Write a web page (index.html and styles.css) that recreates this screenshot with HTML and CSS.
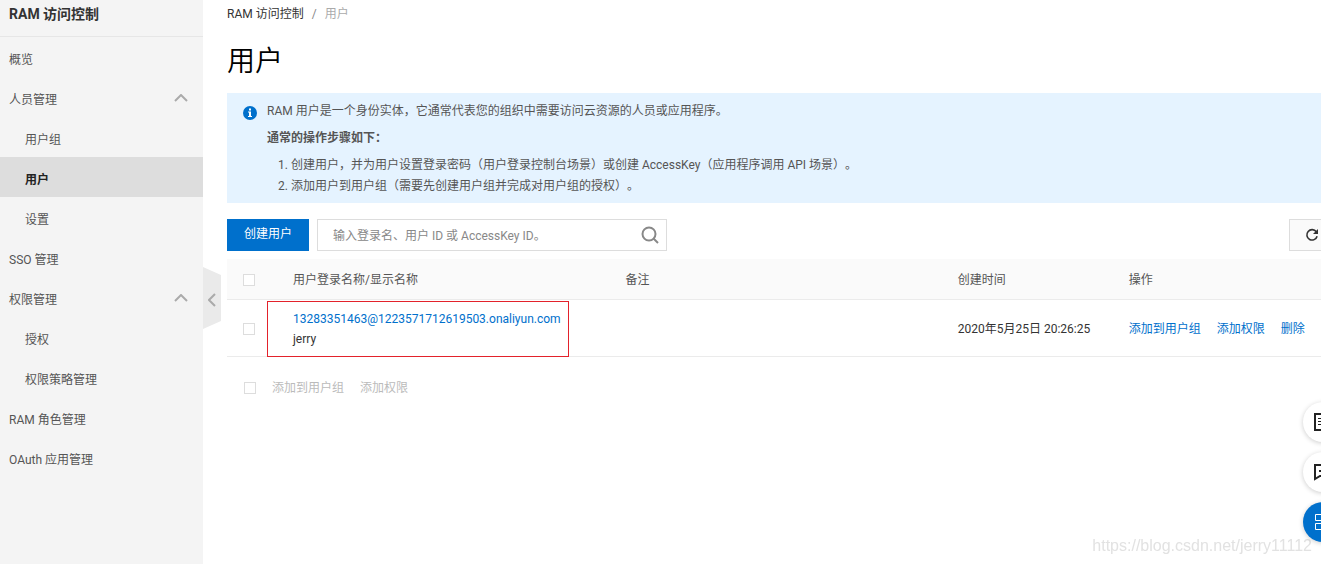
FILE: index.html
```html
<!DOCTYPE html>
<html lang="zh-CN">
    <head>
        <meta charset="UTF-8" />
        <meta name="viewport" content="width=device-width, initial-scale=1.0" />
        <title>RAM 访问控制</title>
        <link rel="stylesheet" href="styles.css">
    </head>
    <body>
        <aside class="sidebar">
            <h2 class="sidebar-title">RAM 访问控制</h2>
            <nav class="menu">
                <a href="#">概览</a>
                <a href="#" class="group">
                    人员管理
                    <svg width="14" height="12" viewBox="0 0 14 12"><path d="M1 7l6-6 6 6" /></svg>
                </a>
                <a href="#" class="sub">用户组</a>
                <a href="#" class="sub active">用户</a>
                <a href="#" class="sub">设置</a>
                <a href="#">SSO 管理</a>
                <a href="#" class="group">
                    权限管理
                    <svg width="14" height="12" viewBox="0 0 14 12"><path d="M1 7l6-6 6 6" /></svg>
                </a>
                <a href="#" class="sub">授权</a>
                <a href="#" class="sub">权限策略管理</a>
                <a href="#">RAM 角色管理</a>
                <a href="#">OAuth 应用管理</a>
            </nav>
            <button class="collapse" aria-label="收起">
                <svg width="8" height="14" viewBox="0 0 8 14"><path d="M7 1L1 7l6 6" /></svg>
            </button>
        </aside>

        <main class="main">
            <div class="breadcrumb">
                <a href="#">RAM 访问控制</a>
                <span>/</span>
                <span class="current">用户</span>
            </div>
            <h1>用户</h1>

            <section class="notice">
                <svg class="notice-icon" width="14" height="14" viewBox="0 0 14 14">
                    <circle cx="7" cy="7" r="7" fill="#0070cc" />
                    <path d="M6 2.5h2v2H6zM5 5.5h3v4.5h1v1H5v-1h1V6.500H5z" fill="#fff" />
                </svg>
                <div>
                    <p>RAM 用户是一个身份实体，它通常代表您的组织中需要访问云资源的人员或应用程序。</p>
                    <p class="steps-title">通常的操作步骤如下：</p>
                    <ol>
                        <li>创建用户，并为用户设置登录密码（用户登录控制台场景）或创建 AccessKey（应用程序调用 API 场景）。</li>
                        <li>添加用户到用户组（需要先创建用户组并完成对用户组的授权）。</li>
                    </ol>
                </div>
            </section>

            <div class="toolbar">
                <button class="create">创建用户</button>
                <div class="search">
                    <input type="text" aria-label="搜索用户" placeholder="输入登录名、用户 ID 或 AccessKey ID。" />
                    <svg width="18" height="18" viewBox="0 0 18 18">
                        <circle cx="8" cy="8" r="6.5" />
                        <path d="M12.500 12.500L17 17" />
                    </svg>
                </div>
                <button class="refresh" aria-label="刷新">
                    <svg width="14" height="14" viewBox="0 0 14 14">
                        <path d="M11.300 3.800A5.200 5.200 0 1 0 12.100 8.200" fill="none" stroke="#333" stroke-width="1.600" />
                        <path d="M13 1v5H8z" fill="#333" />
                    </svg>
                </button>
            </div>

            <table>
                <colgroup>
                    <col class="col-check" />
                    <col class="col-name" />
                    <col class="col-note" />
                    <col class="col-time" />
                    <col />
                </colgroup>
                <thead>
                    <tr>
                        <th><input type="checkbox" aria-label="全选" /></th>
                        <th>用户登录名称/显示名称</th>
                        <th>备注</th>
                        <th>创建时间</th>
                        <th>操作</th>
                    </tr>
                </thead>
                <tbody>
                    <tr>
                        <td><input type="checkbox" aria-label="选择 jerry" /></td>
                        <td class="name">
                            <a href="#">13283351463@1223571712619503.onaliyun.com</a>
                            <div>jerry</div>
                            <span class="mark"></span>
                        </td>
                        <td></td>
                        <td>2020年5月25日 20:26:25</td>
                        <td>
                            <div class="actions">
                                <a href="#">添加到用户组</a>
                                <a href="#">添加权限</a>
                                <a href="#">删除</a>
                            </div>
                        </td>
                    </tr>
                </tbody>
            </table>

            <div class="batch">
                <input type="checkbox" aria-label="批量选择" />
                <button disabled>添加到用户组</button>
                <button disabled>添加权限</button>
            </div>
        </main>

        <div class="watermark">https://blog.csdn.net/jerry11112</div>

        <!-- 右侧悬浮按钮 -->
        <div class="floats">
            <button aria-label="文档">
                <svg width="18" height="18" viewBox="0 0 18 18">
                    <path d="M1 1h15v16H1z" />
                    <path d="M4 5.500h9M4 8.500h9M4 11.500h9" stroke-width="1" />
                </svg>
            </button>
            <button aria-label="反馈">
                <svg width="18" height="18" viewBox="0 0 18 18">
                    <path d="M1 2h15v11H6l-5 3zM5 8h2M10 8h2" />
                </svg>
            </button>
            <button class="primary" aria-label="更多">
                <svg width="18" height="18" viewBox="0 0 18 18">
                    <path d="M1.500 1.500h6v6h-6zM10.500 1.500h6v6h-6zM1.500 10.500h6v6h-6zM10.500 10.500h6v6h-6z" />
                </svg>
            </button>
        </div>
    </body>
</html>
```
FILE: styles.css
```css
* {
    box-sizing: border-box;
}

body {
    margin: 0;
    min-height: 100vh;
    display: flex;
    overflow: hidden;
    background: #fff;
    color: #333;
    font-family: Roboto, "Noto Sans CJK SC", sans-serif;
    font-size: 12px;
    line-height: 20px;
    text-spacing-trim: space-all;
}

a {
    color: #0070cc;
    text-decoration: none;
}

button,
input {
    font: inherit;
    cursor: pointer;
}

.sidebar {
    position: relative;
    flex: 0 0 203px;
    background: #f4f4f4;
}

.sidebar-title {
    height: 37px;
    margin: 0;
    padding: 4px 9px;
    border-bottom: 1px solid #e6e6e6;
    font-size: 14px;
    font-weight: 700;
    line-height: 20px;
}

.menu a {
    display: block;
    padding: 6px 9px 0;
    color: #555;
    line-height: 34px;
}

.menu .group {
    display: flex;
    align-items: center;
    justify-content: space-between;
    padding-right: 15px;
}

.menu .sub {
    padding-left: 25px;
}

.menu .active {
    background: #ddd;
    color: #222;
    font-weight: 700;
}

.menu svg,
.collapse svg {
    fill: none;
    stroke: #aaa;
    stroke-width: 2;
}

.collapse {
    position: absolute;
    top: 267px;
    left: 100%;
    width: 18px;
    height: 62px;
    padding: 0;
    border: 0;
    background: #eaeaea;
    clip-path: polygon(0 0, 100% 8px, 100% 54px, 0 100%);
}

.collapse svg {
    display: block;
    margin: 3px auto 0;
}

/* 主内容比窗口略宽，右侧被裁掉 */
.main {
    flex: 1;
    min-width: 0;
    margin-right: -14px;
    padding: 4px 0 0 24px;
}

.breadcrumb {
    display: flex;
    gap: 8px;
    color: #888;
}

.breadcrumb a {
    color: #333;
}

.breadcrumb .current {
    color: #aaa;
}

h1 {
    margin: 18px 0 11px;
    color: #000;
    font-size: 28px;
    font-weight: 350;
    line-height: 40px;
}

.notice {
    display: flex;
    gap: 10px;
    padding: 8px 16px 6px;
    background: #e5f3ff;
    color: #555;
}

.notice-icon {
    flex: none;
    margin-top: 5px;
}

.notice p {
    margin: 0 0 7px;
}

.notice .steps-title {
    font-weight: 700;
}

.notice ol {
    margin: 0;
    padding-left: 24px;
    line-height: 21px;
}

.toolbar {
    display: flex;
    margin: 16px 0 8px;
}

.create {
    width: 82px;
    height: 32px;
    padding: 0 0 3px;
    border: 0;
    background: #0070cc;
    color: #fff;
}

.search {
    display: flex;
    align-items: center;
    width: 350px;
    height: 32px;
    margin-left: 8px;
    padding: 0 7px 0 15px;
    border: 1px solid #ddd;
}

.search input {
    flex: 1;
    padding: 2px 0 0;
    border: 0;
    outline: 0;
    cursor: text;
}

.search input::placeholder {
    color: #888;
}

.search svg {
    fill: none;
    stroke: #888;
    stroke-width: 2;
}

.refresh {
    width: 46px;
    height: 32px;
    margin-left: auto;
    padding: 0;
    border: 1px solid #ddd;
    background: #fafafa;
}

.refresh svg {
    display: block;
    margin: 0 auto;
}

table {
    width: 100%;
    table-layout: fixed;
    border-spacing: 0;
}

.col-check {
    width: 50px;
}

.col-name,
.col-note {
    width: 30%;
}

.col-time {
    width: 171px;
}

th,
td {
    border-bottom: 1px solid #ebebeb;
    text-align: left;
    font-weight: 400;
}

th {
    height: 41px;
    padding: 2px 16px 0;
    background: #fafafa;
    color: #555;
}

td {
    padding: 9px 16px 7px;
}

input[type='checkbox'] {
    appearance: none;
    display: block;
    width: 12px;
    height: 12px;
    margin: 0;
    border: 1px solid #ddd;
    background: #fff;
}

.name {
    position: relative;
}

/* 红色标注框 */
.mark {
    position: absolute;
    top: 1px;
    left: -10px;
    width: 302px;
    height: 56px;
    border: 1px solid #e3222b;
    pointer-events: none;
}

.actions {
    display: flex;
    gap: 16px;
}

.batch {
    display: flex;
    align-items: center;
    gap: 16px;
    margin: 21px 0 0 17px;
}

.batch button {
    padding: 0;
    border: 0;
    background: none;
    color: #bbb;
}

.floats {
    position: fixed;
    right: -22px;
    bottom: 22px;
    display: flex;
    flex-direction: column;
    gap: 10px;
}

.floats button {
    width: 40px;
    height: 40px;
    padding: 0;
    border: 0;
    border-radius: 50%;
    background: #fff;
    box-shadow: 0 1px 5px rgba(0, 0, 0, 0.2);
}

.floats svg {
    display: block;
    margin: 0 auto;
    fill: none;
    stroke: #222;
    stroke-width: 2;
}

.floats .primary {
    background: #0070cc;
}

.floats .primary svg {
    stroke: #fff;
    stroke-width: 1;
}

.watermark {
    position: fixed;
    right: 9px;
    bottom: 8px;
    color: #e2e2e2;
    font-family: "Liberation Sans", sans-serif;
    font-size: 16px;
}
```
